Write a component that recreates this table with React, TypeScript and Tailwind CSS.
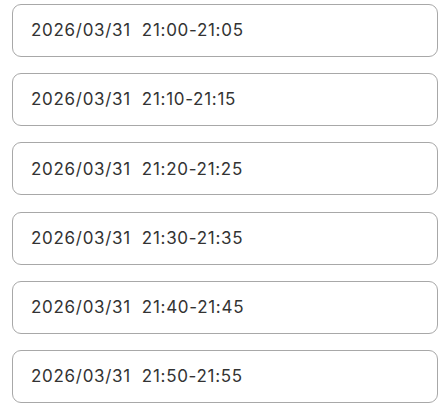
const SLOTS = [
  '21:00-21:05',
  '21:10-21:15',
  '21:20-21:25',
  '21:30-21:35',
  '21:40-21:45',
  '21:50-21:55',
];

export default function App(): React.ReactElement {
  return (
    <div className="flex h-[408px] w-[446px] flex-col gap-[16.2px] bg-white px-3 pt-1 font-['Inter',sans-serif]">
      {SLOTS.map((slot) => (
        <div
          key={slot}
          className="flex h-[53px] w-[426px] shrink-0 items-center rounded-[9px] border border-[#a8a8a8] pl-[18px] pt-px text-[17px] tracking-[0.7px] text-[#333333]"
        >
          <span className="whitespace-pre">2026/03/31  {slot}</span>
        </div>
      ))}
    </div>
  );
}
